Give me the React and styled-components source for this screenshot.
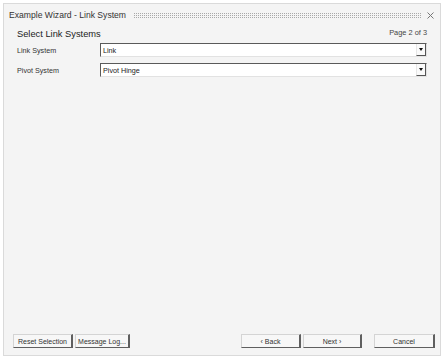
import React from "react";
import styled, { createGlobalStyle } from "styled-components";

const GlobalStyle = createGlobalStyle`
  html, body {
    margin: 0;
    padding: 0;
    background: #ffffff;
    font-family: "Liberation Sans", Arial, sans-serif;
  }
`;

const Window = styled.div`
  box-sizing: border-box;
  margin: 3px;
  width: 438px;
  height: 353px;
  border: 1px solid #dadada;
  background: #f4f4f4;
  display: flex;
  flex-direction: column;
  color: #262626;
`;

const TitleBar = styled.div`
  height: 22px;
  display: flex;
  align-items: center;
  padding: 0 6px 0 5px;
`;

const Title = styled.span`
  font-size: 8.6px;
  white-space: nowrap;
  color: #333;
`;

const Grip = styled.div`
  flex: 1;
  height: 5px;
  margin: 0 6px 0 7px;
  background: conic-gradient(#a9a9a9 25%, transparent 0) 0 0 / 2px 2px;
`;

const Close = styled.svg`
  width: 7px;
  height: 7px;
  display: block;
`;

const Body = styled.div`
  flex: 1;
  display: flex;
  flex-direction: column;
  padding: 0 13px 0 13px;
`;

const Header = styled.div`
  display: flex;
  justify-content: space-between;
  align-items: flex-start;
  height: 17px;
`;

const Heading = styled.span`
  font-size: 9.3px;
  color: #222;
  margin-top: 3px;
`;

const PageNo = styled.span`
  font-size: 7.4px;
  color: #444;
  margin-top: 2px;
`;

const Rows = styled.div`
  display: flex;
  flex-direction: column;
  gap: 6px;
`;

const Row = styled.div`
  display: flex;
  align-items: center;
  height: 14px;
`;

const Label = styled.span`
  width: 83px;
  font-size: 7.2px;
  color: #333;
`;

const Combo = styled.div`
  box-sizing: border-box;
  flex: 1;
  height: 14px;
  background: #fff;
  border-top: 1px solid #5a5a5a;
  border-left: 1px solid #5a5a5a;
  border-right: 1px solid #e2e2e2;
  border-bottom: 1px solid #e2e2e2;
  display: flex;
  align-items: center;
  padding-left: 2px;
`;

const ComboText = styled.span`
  flex: 1;
  font-size: 7.2px;
  color: #222;
`;

const DropButton = styled.div`
  box-sizing: border-box;
  width: 10px;
  height: 12px;
  background: #fafafa;
  border-left: 1px solid #e6e6e6;
  border-right: 1px solid #555;
  border-bottom: 1px solid #555;
  display: flex;
  align-items: center;
  justify-content: center;
`;

const Arrow = styled.span`
  width: 0;
  height: 0;
  border-left: 2.5px solid transparent;
  border-right: 2.5px solid transparent;
  border-top: 3px solid #111;
`;

const Footer = styled.div`
  display: flex;
  align-items: center;
  padding: 0 5px 7px 9px;
`;

const Button = styled.button`
  box-sizing: border-box;
  height: 14px;
  width: ${(p) => p.w}px;
  margin-left: ${(p) => p.gap || 0}px;
  padding: 0 3px;
  background: #f7f7f7;
  border-top: 1px solid #d4d4d4;
  border-left: 1px solid #d4d4d4;
  border-right: 2px solid #5f5f5f;
  border-bottom: 1px solid #5f5f5f;
  font-family: "Liberation Sans", Arial, sans-serif;
  font-size: 7px;
  color: #333;
  white-space: nowrap;
  display: flex;
  align-items: center;
  justify-content: center;
`;

const Spacer = styled.div`
  flex: 1;
`;

const systems = [
  { label: "Link System", value: "Link" },
  { label: "Pivot System", value: "Pivot Hinge" },
];

export default function App() {
  return (
    <>
      <GlobalStyle />
      <Window>
        <TitleBar>
          <Title>Example Wizard - Link System</Title>
          <Grip />
          <Close viewBox="0 0 7 7">
            <path d="M0.5 0.5 L6.5 6.5 M6.5 0.5 L0.5 6.5" stroke="#777" strokeWidth="1" />
          </Close>
        </TitleBar>
        <Body>
          <Header>
            <Heading>Select Link Systems</Heading>
            <PageNo>Page 2 of 3</PageNo>
          </Header>
          <Rows>
            {systems.map((s) => (
              <Row key={s.label}>
                <Label>{s.label}</Label>
                <Combo>
                  <ComboText>{s.value}</ComboText>
                  <DropButton>
                    <Arrow />
                  </DropButton>
                </Combo>
              </Row>
            ))}
          </Rows>
        </Body>
        <Footer>
          <Button w={60}>Reset Selection</Button>
          <Button w={55} gap={2}>Message Log...</Button>
          <Spacer />
          <Button w={60}>&lsaquo; Back</Button>
          <Button w={59} gap={2}>Next &rsaquo;</Button>
          <Button w={61} gap={12}>Cancel</Button>
        </Footer>
      </Window>
    </>
  );
}
